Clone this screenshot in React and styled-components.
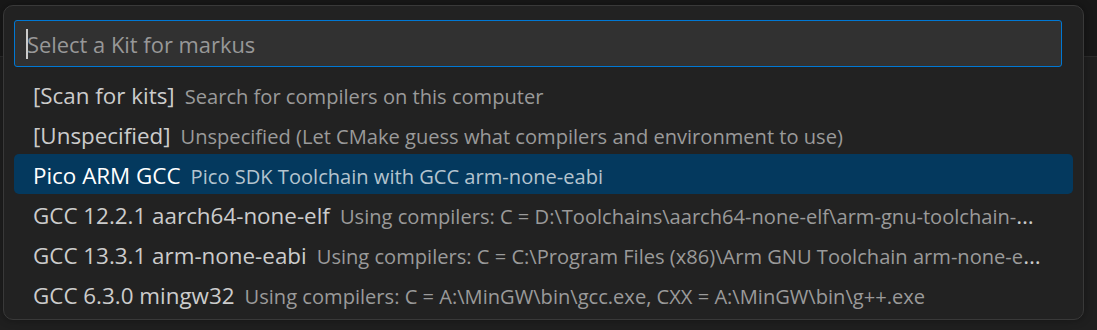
import React from "react"
import styled, { createGlobalStyle } from "styled-components"

const GlobalStyle = createGlobalStyle`
  html, body {
    margin: 0;
    padding: 0;
    background: #181818;
    width: 1097px;
    height: 330px;
    overflow: hidden;
  }
`

const kits = [
  { label: "[Scan for kits]", description: "Search for compilers on this computer" },
  {
    label: "[Unspecified]",
    description: "Unspecified (Let CMake guess what compilers and environment to use)",
  },
  { label: "Pico ARM GCC", description: "Pico SDK Toolchain with GCC arm-none-eabi", selected: true },
  {
    label: "GCC 12.2.1 aarch64-none-elf",
    description:
      "Using compilers: C = D:\\Toolchains\\aarch64-none-elf\\arm-gnu-toolchain-12.2.rel1-mingw-w64-i686-aarch64-none-elf\\bin\\aarch64-none-elf-gcc.exe",
  },
  {
    label: "GCC 13.3.1 arm-none-eabi",
    description:
      "Using compilers: C = C:\\Program Files (x86)\\Arm GNU Toolchain arm-none-eabi\\13.3 rel1\\bin\\arm-none-eabi-gcc.exe",
  },
  {
    label: "GCC 6.3.0 mingw32",
    description: "Using compilers: C = A:\\MinGW\\bin\\gcc.exe, CXX = A:\\MinGW\\bin\\g++.exe",
  },
]

export default function App() {
  return (
    <>
      <GlobalStyle />
      <Workbench>
        <TabStrip />
        <QuickPick>
          <InputBox>
            <Caret />
            <Placeholder>Select a Kit for markus</Placeholder>
          </InputBox>
          <List>
            {kits.map((kit) => (
              <Row key={kit.label} selected={kit.selected}>
                <RowText>
                  <Label selected={kit.selected}>{kit.label}</Label>
                  <Description selected={kit.selected}>{kit.description}</Description>
                </RowText>
              </Row>
            ))}
          </List>
        </QuickPick>
      </Workbench>
    </>
  )
}

const Workbench = styled.div`
  position: relative;
  width: 1097px;
  height: 330px;
  background: #1f1f1f;
  font-family: "Open Sans", "Noto Sans", sans-serif;
`

const TabStrip = styled.div`
  height: 56px;
  background: #181818;
  border-bottom: 1px solid #2b2b2b;
`

const QuickPick = styled.div`
  position: absolute;
  left: 3px;
  top: 5px;
  width: 1081px;
  height: 315px;
  box-sizing: border-box;
  background: #222222;
  border: 1px solid #393939;
  border-radius: 10px;
  padding: 14px 21px 0 10px;
  display: flex;
  flex-direction: column;
  box-shadow: 0 0 8px rgba(0, 0, 0, 0.36);
`

const InputBox = styled.div`
  height: 47px;
  box-sizing: border-box;
  background: #313131;
  border: 1px solid #0078d4;
  border-radius: 3px;
  display: flex;
  align-items: center;
  padding-left: 11px;
`

const Caret = styled.span`
  width: 2px;
  height: 30px;
  background: #cccccc;
  margin-right: -1px;
`

const Placeholder = styled.span`
  color: #989898;
  font-size: 21.9px;
  line-height: 1;
  padding-top: 2px;
`

const List = styled.div`
  margin-top: 7px;
  margin-right: -11px;
  display: flex;
  flex-direction: column;
`

const Row = styled.div`
  height: 40px;
  border-radius: 5px;
  background: ${(p) => (p.selected ? "#04395e" : "transparent")};
  display: flex;
  align-items: center;
  padding: 0 32px 0 19px;
  min-width: 0;
`

const RowText = styled.div`
  flex: 1;
  min-width: 0;
  white-space: nowrap;
  overflow: hidden;
  text-overflow: ellipsis;
  font-size: 22.4px;
  line-height: 36px;
  padding-top: 4px;
  color: #cccccc;
`

const Label = styled.span`
  color: ${(p) => (p.selected ? "#ffffff" : "#cccccc")};
`

const Description = styled.span`
  margin-left: 0.5em;
  font-size: 20.1px;
  color: ${(p) => (p.selected ? "#b4c4cf" : "#9a9a9a")};
`
